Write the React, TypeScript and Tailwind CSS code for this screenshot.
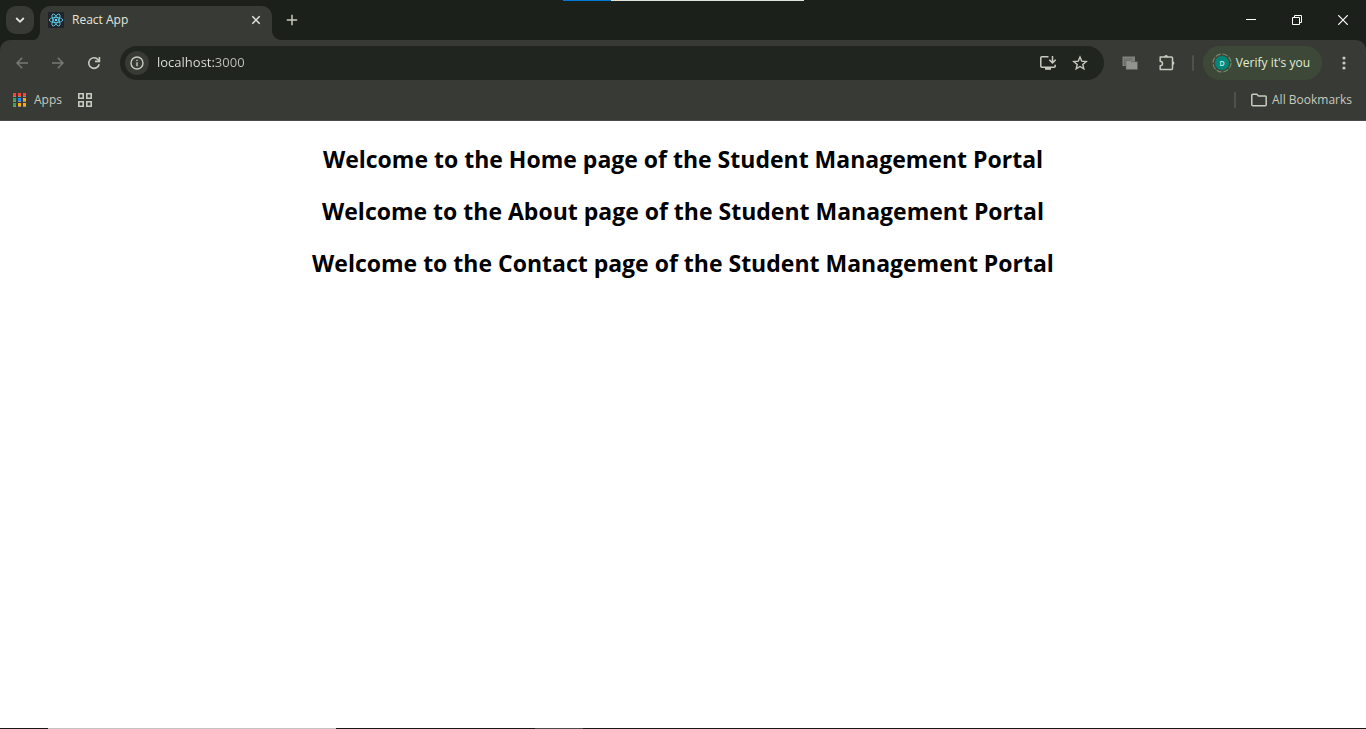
import React from "react";

function ReactLogo() {
  return (
    <svg viewBox="0 0 16 16" className="size-4 shrink-0" aria-hidden="true">
      <rect width="16" height="16" rx="1" fill="#20232a" />
      <g fill="none" stroke="#61dafb" strokeWidth="0.8">
        <ellipse cx="8" cy="8" rx="6.7" ry="2.6" />
        <ellipse cx="8" cy="8" rx="6.7" ry="2.6" transform="rotate(60 8 8)" />
        <ellipse cx="8" cy="8" rx="6.7" ry="2.6" transform="rotate(120 8 8)" />
      </g>
      <circle cx="8" cy="8" r="1.3" fill="#61dafb" />
    </svg>
  );
}

function TabStrip() {
  return (
    <div className="flex h-10 items-start bg-[#1c201a]">
      <button
        aria-label="Search tabs"
        className="mt-1.5 ml-1.5 flex size-7 items-center justify-center rounded-[10px] bg-[#383b35] text-[#e3e6de]"
      >
        <svg viewBox="0 0 10 10" className="size-2.5" fill="none" stroke="currentColor" strokeWidth="1.8">
          <path d="M1.2 3l3.8 3.8L8.800 3" />
        </svg>
      </button>
      <div className="flex items-start">
        <svg viewBox="0 0 6 10" className="mt-[30px] h-2.5 w-1.5" aria-hidden="true">
          <path d="M6 0v10H0C4 9 6 5 6 0Z" fill="#383b35" />
        </svg>
        <div className="mt-1.5 flex h-[34px] w-[232px] items-center rounded-t-[10px] bg-[#383b35] pr-2 pb-1.5 pl-2">
          <ReactLogo />
          <span className="ml-2 grow text-xs text-[#e3e6de]">React App</span>
          <button aria-label="Close tab" className="flex size-4 items-center justify-center text-[#e3e6de]">
            <svg viewBox="0 0 10 10" className="size-2.5" fill="none" stroke="currentColor" strokeWidth="1.5">
              <path d="M1.300 1.300l7.400 7.400M8.700 1.300L1.300 8.700" />
            </svg>
          </button>
        </div>
        <svg viewBox="0 0 10 10" className="mt-[30px] size-2.5" aria-hidden="true">
          <path d="M0 0v10h10C4 10 0 6 0 0Z" fill="#383b35" />
        </svg>
      </div>
      <button aria-label="New tab" className="mt-1.5 -ml-1 flex size-7 items-center justify-center text-[#c7cabf]">
        <svg viewBox="0 0 12 12" className="size-3" fill="none" stroke="currentColor" strokeWidth="1.5">
          <path d="M6 0.800v10.400M0.800 6h10.400" />
        </svg>
      </button>
      <div className="ml-auto flex h-10 text-white">
        <button aria-label="Minimize" className="flex w-[46px] items-center justify-center">
          <svg viewBox="0 0 10 10" className="size-2.5" stroke="currentColor">
            <path d="M0 4.500h10" />
          </svg>
        </button>
        <button aria-label="Restore" className="flex w-[46px] items-center justify-center">
          <svg viewBox="0 0 10 10" className="size-2.5" fill="none" stroke="currentColor">
            <path d="M0.500 2.500h7v7h-7zM2.500 2.500v-2h7v7h-2" />
          </svg>
        </button>
        <button aria-label="Close" className="flex w-[46px] items-center justify-center">
          <svg viewBox="0 0 10 10" className="size-2.5" fill="none" stroke="currentColor" strokeWidth="1.200">
            <path d="M0.200 0.200l9.600 9.600M9.800 0.200L0.200 9.800" />
          </svg>
        </button>
      </div>
    </div>
  );
}

function ArrowIcon({ className }: { className?: string }) {
  return (
    <svg viewBox="0 0 12 12" className={"size-3 " + (className ?? "")} fill="none" stroke="currentColor" strokeWidth="1.500">
      <path d="M12 6H1.200M6.200 0.800L1 6l5.200 5.200" />
    </svg>
  );
}

function Toolbar() {
  return (
    <div className="flex h-[46px] items-center rounded-t-[10px] bg-[#383b35] pl-2 pr-2">
      <button aria-label="Back" className="flex size-7 items-center justify-center text-[#777a73]">
        <ArrowIcon />
      </button>
      <button aria-label="Forward" className="ml-2 flex size-7 items-center justify-center text-[#777a73]">
        <ArrowIcon className="rotate-180" />
      </button>
      <button aria-label="Reload" className="ml-2 flex size-7 items-center justify-center text-[#c7cabf]">
        <svg viewBox="0 0 16 16" className="size-4" fill="none" stroke="currentColor" strokeWidth="1.600">
          <path d="M13.200 9.200A5.300 5.300 0 1 1 12 4.500L13.400 6" />
          <path d="M13.400 2v4.400H9" />
        </svg>
      </button>
      <div className="ml-3 flex h-[34px] grow items-center rounded-full bg-[#20251f] pr-4 pl-[5px] text-[#c7cabf]">
        <button aria-label="View site information" className="flex size-6 items-center justify-center rounded-full bg-[#383b35]">
          <svg viewBox="0 0 14 14" className="size-3.5" fill="none" stroke="currentColor" strokeWidth="1.400">
            <circle cx="7" cy="7" r="6" />
            <path d="M7 6.200v4M7 3.700v1.400" />
          </svg>
        </button>
        <input
          aria-label="Address and search bar"
          defaultValue="localhost:3000"
          className="ml-2 min-w-0 grow bg-[linear-gradient(90deg,#e3e6de_58px,#c0c3ba_58px)] bg-clip-text text-[13px] text-transparent caret-white outline-none"
        />
        <button aria-label="Install app" className="flex size-4 items-center justify-center">
          <svg viewBox="0 0 16 16" className="size-4" fill="none" stroke="currentColor" strokeWidth="1.500">
            <path d="M8.500 1.800H1.800a1 1 0 0 0-1 1v8.400a1 1 0 0 0 1 1h12.400a1 1 0 0 0 1-1V9.800" />
            <path d="M12.500 1v6.500M9.300 4.700l3.200 3.200 3.200-3.200" />
            <path d="M5 13.700h6" strokeWidth="2.200" />
          </svg>
        </button>
        <button aria-label="Bookmark this tab" className="ml-4 flex size-4 items-center justify-center">
          <svg viewBox="0 0 16 16" className="size-4" fill="none" stroke="currentColor" strokeWidth="1.400">
            <path d="M8 2l1.700 4.100 4.500.4-3.400 2.900 1 4.400L8 11.500l-3.800 2.300 1-4.400-3.400-2.900 4.500-.4Z" />
          </svg>
        </button>
      </div>
      <button aria-label="Extension" className="ml-[18px] flex size-4 items-center justify-center">
        <svg viewBox="0 0 16 16" className="size-4">
          <path d="M0.500 1.500h12.500v9.500h-12.500z" fill="#80827e" />
          <path d="M2.500 10V4h8" fill="none" stroke="#666863" strokeWidth="0.800" />
          <path d="M4 5.500h4l1.200 1.300h6.300v7.700H4z" fill="#92948f" stroke="#5c5f59" strokeWidth="0.600" />
        </svg>
      </button>
      <button aria-label="Extensions" className="ml-5 flex size-[18px] items-center justify-center text-[#c7cabf]">
        <svg viewBox="0 0 18 18" className="size-[18px]">
          <path
            d="M2.200 3h11.300a1 1 0 0 1 1 1v10.500a1 1 0 0 1-1 1H2.200v-3.700a2.300 2.300 0 0 0 0-4.600Z"
            fill="none"
            stroke="currentColor"
            strokeWidth="1.500"
            strokeLinejoin="round"
          />
          <path d="M6.200 3a1.900 1.900 0 0 1 3.800 0ZM14.500 7.200a1.900 1.900 0 0 1 0 3.800Z" fill="currentColor" />
        </svg>
      </button>
      <span className="ml-4 h-4 w-0.5 rounded bg-[#4e534a]" />
      <button className="ml-[9px] flex h-[34px] items-center rounded-full bg-[#3e4839] pr-3 pl-[9px] text-xs whitespace-nowrap text-[#e0eed6]">
        <svg viewBox="0 0 20 20" className="mr-1 size-5" aria-hidden="true">
          <circle cx="10" cy="10" r="9" fill="none" stroke="#75856c" strokeWidth="1.200" strokeDasharray="5.600 1.469" />
          <circle cx="10" cy="10" r="7" fill="#00897b" />
          <text x="10" y="12.500" fontSize="7" fontWeight="600" textAnchor="middle" fill="#d5eeea">
            D
          </text>
        </svg>
        Verify it's you
      </button>
      <button aria-label="Menu" className="ml-2 flex size-7 items-center justify-center text-[#c7cabf]">
        <svg viewBox="0 0 4 14" className="h-3.5 w-1" fill="currentColor">
          <circle cx="2" cy="2" r="1.600" />
          <circle cx="2" cy="7" r="1.600" />
          <circle cx="2" cy="12" r="1.600" />
        </svg>
      </button>
    </div>
  );
}

const appColours = ["#ff4131", "#ff4131", "#ff4131", "#34a853", "#1e88ff", "#fbad05", "#34a853", "#fbad05", "#fbad05"];

function BookmarksBar() {
  return (
    <div className="flex h-[35px] items-center border-b border-[#4a4a46] bg-[#383b35] pr-3.5 pb-1.5 pl-3 text-xs text-[#c7cabf]">
      <a href="#apps" className="flex items-center">
        <svg viewBox="0 0 15 14" className="mr-[7px] h-3.5 w-[15px]" aria-hidden="true" shapeRendering="crispEdges">
          {appColours.map((colour, i) => (
            <g key={i}>
              <rect x={1 + (i % 3) * 5} y={Math.floor(i / 3) * 5} width="3" height="3" fill={colour} />
              <rect x={1 + (i % 3) * 5} y={3 + Math.floor(i / 3) * 5} width="3" height="1" fill="#8d9189" />
            </g>
          ))}
        </svg>
        Apps
      </a>
      <button aria-label="Tab groups" className="ml-[15px]">
        <svg viewBox="0 0 16 16" className="size-4" fill="none" stroke="currentColor" strokeWidth="1.600">
          <path d="M1.800 1.800h4.400v4.400H1.800zM9.800 1.800h4.400v4.400H9.800zM1.800 9.800h4.400v4.400H1.800zM9.800 9.800h4.400v4.400H9.800z" />
        </svg>
      </button>
      <span className="ml-auto h-4 w-0.5 rounded bg-[#4e534a]" />
      <button className="ml-[15px] flex items-center whitespace-nowrap">
        <svg viewBox="0 0 16 16" className="mr-[5px] size-4" fill="none" stroke="currentColor" strokeWidth="1.500">
          <path d="M0.800 12.700V3.300a1 1 0 0 1 1-1h4L7.500 4h6.700a1 1 0 0 1 1 1v7.700a1 1 0 0 1-1 1H1.800a1 1 0 0 1-1-1Z" />
        </svg>
        All Bookmarks
      </button>
    </div>
  );
}

const pages = ["Home", "About", "Contact"];

export default function App() {
  return (
    <div className="relative flex min-h-screen flex-col bg-white font-['Open_Sans','Noto_Sans',sans-serif]">
      <div className="absolute inset-x-0 top-0 mx-auto flex h-px w-[241px]">
        <span className="w-12 bg-[#0078d7]" />
        <span className="grow bg-[#dfe3da]" />
      </div>
      <header className="bg-[#1c201a]">
        <TabStrip />
        <Toolbar />
        <BookmarksBar />
      </header>
      <main className="flex grow flex-col gap-5 pt-[22px] text-center text-[23px] leading-8 font-bold text-black">
        {pages.map((page) => (
          <h2 key={page}>Welcome to the {page} page of the Student Management Portal</h2>
        ))}
      </main>
      <div className="flex h-px bg-[#171717]">
        <span className="ml-12 w-72 bg-[#c4c4c4]" />
        <span className="ml-[199px] w-12 bg-[#4b4b4b]" />
      </div>
    </div>
  );
}
